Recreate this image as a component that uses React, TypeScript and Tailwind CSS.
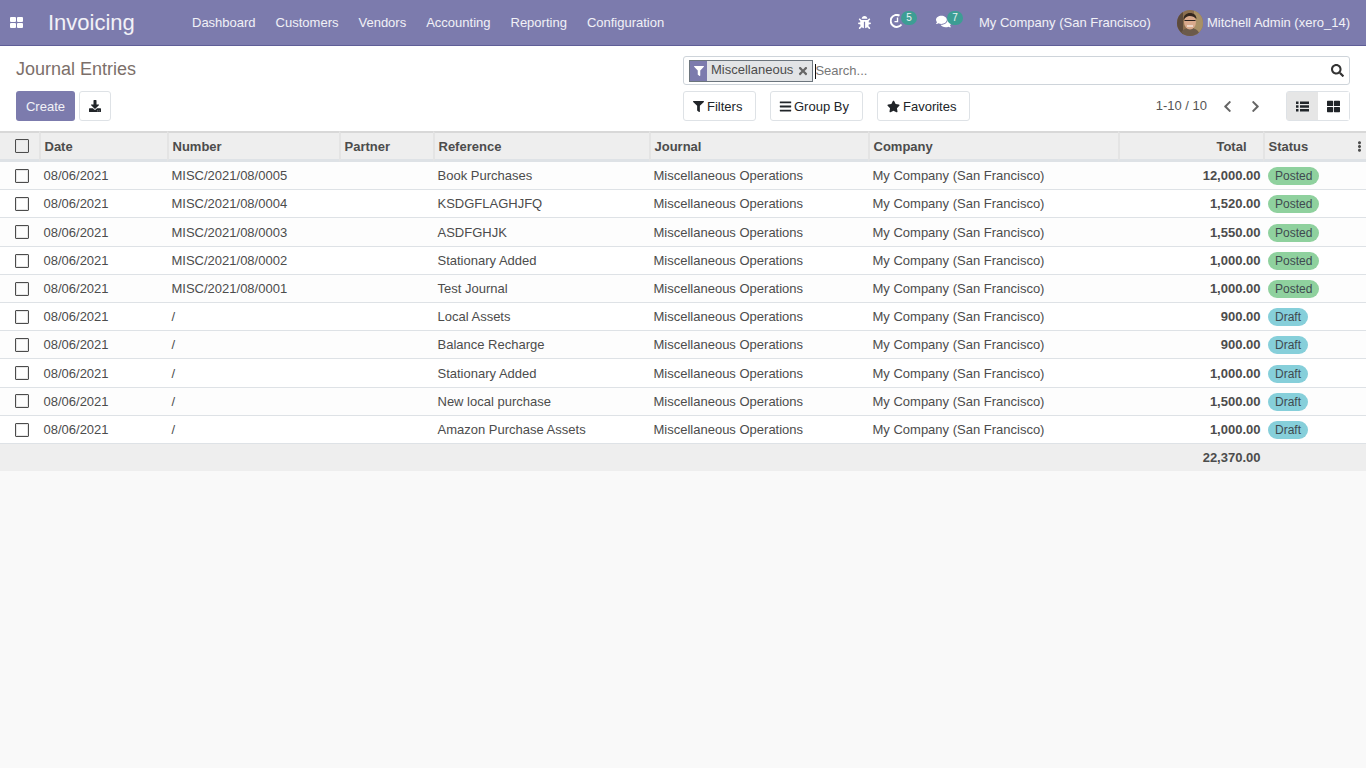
import { FaBug, FaChevronLeft, FaChevronRight, FaComments, FaDownload, FaEllipsisV, FaFilter, FaBars, FaSearch, FaStar, FaThLarge, FaTimes } from 'react-icons/fa';

const menus = ['Dashboard', 'Customers', 'Vendors', 'Accounting', 'Reporting', 'Configuration'];

const rows = [
  { number: 'MISC/2021/08/0005', reference: 'Book Purchases', total: '12,000.00', status: 'Posted' },
  { number: 'MISC/2021/08/0004', reference: 'KSDGFLAGHJFQ', total: '1,520.00', status: 'Posted' },
  { number: 'MISC/2021/08/0003', reference: 'ASDFGHJK', total: '1,550.00', status: 'Posted' },
  { number: 'MISC/2021/08/0002', reference: 'Stationary Added', total: '1,000.00', status: 'Posted' },
  { number: 'MISC/2021/08/0001', reference: 'Test Journal', total: '1,000.00', status: 'Posted' },
  { number: '/', reference: 'Local Assets', total: '900.00', status: 'Draft' },
  { number: '/', reference: 'Balance Recharge', total: '900.00', status: 'Draft' },
  { number: '/', reference: 'Stationary Added', total: '1,000.00', status: 'Draft' },
  { number: '/', reference: 'New local purchase', total: '1,500.00', status: 'Draft' },
  { number: '/', reference: 'Amazon Purchase Assets', total: '1,000.00', status: 'Draft' },
];

function Checkbox() {
  return <span className="block w-[14px] h-[14px] ml-[15px] border-[1.5px] border-[#4c4c4c] rounded-[1px] shadow-[inset_0_0_0_1px_#e6e6e6]" />;
}

function AppsIcon() {
  return (
    <svg width="13" height="11" viewBox="0 0 13 11" fill="#fff">
      <rect x="0" y="0" width="6" height="5" rx="1" />
      <rect x="7" y="0" width="6" height="5" rx="1" />
      <rect x="0" y="6" width="6" height="5" rx="1" />
      <rect x="7" y="6" width="6" height="5" rx="1" />
    </svg>
  );
}

function ClockIcon() {
  return (
    <svg width="14" height="14" viewBox="0 0 14 14" fill="none" stroke="#fff" className="block">
      <path d="M11.5 10.5A6 6 0 1 1 9.500 1.600" strokeWidth="2" />
      <path d="M7.500 3.500V7.600H4.500" strokeWidth="1.400" />
    </svg>
  );
}

function ListIcon() {
  return (
    <svg width="13" height="11" viewBox="0 0 13 11" fill="#212529">
      <rect x="0" y="0.500" width="2.500" height="2.500" />
      <rect x="0" y="4.250" width="2.500" height="2.500" />
      <rect x="0" y="8" width="2.500" height="2.500" />
      <rect x="4" y="0.500" width="9" height="2.500" />
      <rect x="4" y="4.250" width="9" height="2.500" />
      <rect x="4" y="8" width="9" height="2.500" />
    </svg>
  );
}

function Avatar() {
  return (
    <svg width="26" height="26" viewBox="0 0 26 26" className="rounded-full block">
      <rect width="26" height="26" fill="#8c6f4e" />
      <rect x="17" width="9" height="26" fill="#a89066" />
      <rect width="6" height="26" fill="#5c4a3c" />
      <path d="M3 26c1-6 5-8 10-8s9 2 10 8z" fill="#6b5a4a" />
      <ellipse cx="13" cy="12" rx="6" ry="7.500" fill="#d9a98c" />
      <path d="M6.500 10c0-5 3-7 6.500-7s6.500 2 6.500 6c-2-2-4-3-7-3-2 0-4 1-6 4z" fill="#33261e" />
      <path d="M7.500 10.500h11" stroke="#2a2320" strokeWidth="1" />
      <path d="M10 16h6" stroke="#f3e6dc" strokeWidth="1.300" />
    </svg>
  );
}

function PanelButton({ icon, label, className }: { icon: React.ReactNode; label: string; className: string }) {
  return (
    <button className={`h-[30px] flex items-center px-[9px] bg-white border border-[#dee2e6] rounded-[3px] text-[13px] text-[#212529] ${className}`}>
      {icon}
      <span className="pt-[1px]">{label}</span>
    </button>
  );
}

export default function App() {
  const headCell = 'h-[31px] border-t-2 border-t-[#d8d8d8] border-b-[3px] border-b-[#dee2e6]';
  const bodyCell = 'h-[28.200px] pt-[0.800px] border-b border-[#dee2e6]';

  return (
    <div className="min-h-[768px] bg-[#f9f9f9] [font-family:'Liberation_Sans',Arial,sans-serif] text-[13px] text-[#4c4c4c]">
      {/* Top navbar */}
      <nav className="h-[46px] bg-[#7c7bad] border-b border-[#5f5e97] flex items-center text-white/90">
        <span className="w-[48px] pl-[10px] flex items-center"><AppsIcon /></span>
        <span className="w-[144px] text-[22px] text-white/90 leading-none">Invoicing</span>
        <div className="flex gap-[20px]">
          {menus.map((m) => <span key={m}>{m}</span>)}
        </div>
        <div className="ml-auto flex items-center pr-[16px]">
          <FaBug className="text-white text-[13px] mr-[18.500px]" />
          <span className="relative mr-[32px] mb-[3px]">
            <ClockIcon />
            <span className="absolute -top-[3px] left-[11px] w-[16px] h-[14px] rounded-full bg-[#3d9d94] text-[10px] leading-[14px] text-center">5</span>
          </span>
          <span className="relative mr-[28px] mb-[3px]">
            <FaComments className="block text-white text-[15px]" />
            <span className="absolute -top-[3px] left-[11px] w-[16px] h-[14px] rounded-full bg-[#3d9d94] text-[10px] leading-[14px] text-center">7</span>
          </span>
          <span className="mr-[26px]">My Company (San Francisco)</span>
          <span className="mr-[4px]"><Avatar /></span>
          <span>Mitchell Admin (xero_14)</span>
        </div>
      </nav>

      {/* Control panel */}
      <div className="h-[85px] bg-white grid grid-cols-[683px_1fr] pr-[16px]">
        <div className="pl-[16px] pt-[11px]">
          <h1 className="text-[18px] leading-[25px] text-[#7c6f6a]">Journal Entries</h1>
          <div className="flex gap-[4px] mt-[9px]">
            <button className="w-[59px] h-[30px] pt-[1px] bg-[#7c7bad] rounded-[3px] text-white/90">Create</button>
            <button className="w-[32px] h-[30px] bg-white border border-[#dee2e6] rounded-[3px] flex items-center justify-center">
              <FaDownload className="text-[#212529] text-[12px]" />
            </button>
          </div>
        </div>
        <div className="pt-[10px]">
          <div className="h-[29px] border border-[#ced4da] rounded-[3px] flex items-center pl-[5px] pr-[5px]">
            <span className="h-[22px] flex items-center border border-[#6c757d] bg-[#e2e4e6]">
              <span className="w-[17px] h-full bg-[#7c7bad] flex items-center justify-center">
                <FaFilter className="text-white text-[10px]" />
              </span>
              <span className="pl-[4px] pr-[4px] pb-[1px] text-[#4c4c4c]">Miscellaneous</span>
              <FaTimes className="text-[#666] text-[12px] mr-[3px]" />
            </span>
            <span className="ml-[2px] mt-[1px] w-px h-[15px] bg-[#111]" />
            <span className="-ml-[1px] mt-[1px] text-[#777]">Search...</span>
            <FaSearch className="ml-auto text-[#333] text-[13px]" />
          </div>
          <div className="flex items-center mt-[6px]">
            <PanelButton className="w-[73px] mr-[14px]" icon={<FaFilter className="text-[11px] mr-[3px]" />} label="Filters" />
            <PanelButton className="w-[93px] mr-[14px]" icon={<FaBars className="text-[13px] -ml-[1px] mr-[2px]" />} label="Group By" />
            <PanelButton className="w-[93px]" icon={<FaStar className="text-[13px] mr-[3px]" />} label="Favorites" />
            <span className="ml-auto text-[#555]">1-10 / 10</span>
            <FaChevronLeft className="ml-[13.500px] text-[#666] text-[13px]" />
            <FaChevronRight className="ml-[15px] text-[#666] text-[13px]" />
            <div className="ml-[24.500px] flex h-[30px] border border-[#dee2e6] rounded-[3px]">
              <span className="w-[31px] bg-[#e6e6e6] flex items-center justify-center"><ListIcon /></span>
              <span className="w-[31px] bg-white flex items-center justify-center"><FaThLarge className="text-[#212529] text-[13px]" /></span>
            </div>
          </div>
        </div>
      </div>

      {/* List view */}
      <table className="w-[1366px] table-fixed border-separate border-spacing-0">
        <colgroup>
          <col className="w-[39px]" />
          <col className="w-[128px]" />
          <col className="w-[172px]" />
          <col className="w-[94px]" />
          <col className="w-[216px]" />
          <col className="w-[219px]" />
          <col className="w-[250px]" />
          <col className="w-[145px]" />
          <col className="w-[103px]" />
        </colgroup>
        <thead>
          <tr className="bg-[#eeeeee] font-bold text-left">
            <th className={headCell}><Checkbox /></th>
            {['Date', 'Number', 'Partner', 'Reference', 'Journal', 'Company'].map((h) => (
              <th key={h} className={`${headCell} pl-[3.500px] pt-[1.500px] border-l-2 border-l-[#e4e4e4]`}>{h}</th>
            ))}
            <th className={`${headCell} pr-[16.500px] pt-[1.500px] text-right border-l-2 border-l-[#e4e4e4]`}>Total</th>
            <th className={`${headCell} pl-[3.500px] pt-[1.500px] border-l-2 border-l-[#e4e4e4]`}>
              <div className="flex items-center justify-between pr-[1.500px]">Status<FaEllipsisV className="text-[11px]" /></div>
            </th>
          </tr>
        </thead>
        <tbody>
          {rows.map((r, i) => (
            <tr key={i} className={i % 2 === 0 ? 'bg-[#fdfdfd]' : 'bg-white'}>
              <td className={bodyCell}><Checkbox /></td>
              <td className={`${bodyCell} pl-[4.500px]`}>08/06/2021</td>
              <td className={`${bodyCell} pl-[4.500px]`}>{r.number}</td>
              <td className={bodyCell} />
              <td className={`${bodyCell} pl-[4.500px]`}>{r.reference}</td>
              <td className={`${bodyCell} pl-[4.500px]`}>Miscellaneous Operations</td>
              <td className={`${bodyCell} pl-[4.500px]`}>My Company (San Francisco)</td>
              <td className={`${bodyCell} pr-[2.500px] text-right font-bold`}>{r.total}</td>
              <td className={`${bodyCell} pl-[5px]`}>
                <span className={`inline-block h-[18px] leading-[18px] px-[7px] rounded-full text-[12px] text-[#3f4a50] ${r.status === 'Posted' ? 'bg-[#8fd19e]' : 'bg-[#86cfda]'}`}>{r.status}</span>
              </td>
            </tr>
          ))}
        </tbody>
        <tfoot>
          <tr className="h-[27px] bg-[#eeeeee] font-bold">
            <td colSpan={7} />
            <td className="pr-[2.500px] text-right">22,370.00</td>
            <td />
          </tr>
        </tfoot>
      </table>
    </div>
  );
}
